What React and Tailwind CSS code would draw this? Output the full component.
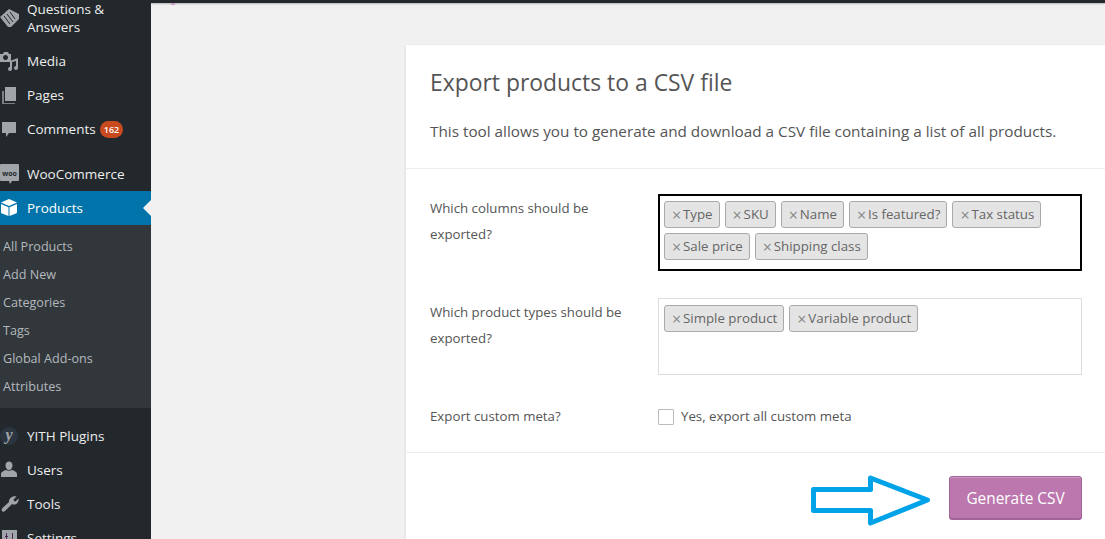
import React from 'react';

const font = { fontFamily: '"Open Sans", sans-serif' };

function Chip({ label }) {
  return (
    <span className="inline-flex items-center h-[27px] pl-[7px] pr-[6px] mr-[5px] mb-[5px] rounded-[3px] border border-[#aaaaaa] bg-[#e4e4e4] text-[13.3px] text-[#666666] whitespace-nowrap">
      <span className="w-[11px] text-[#888888] text-[16px] leading-none">×</span>
      {label}
    </span>
  );
}

function Item({ icon, label, badge, active, two }) {
  return (
    <div className={`flex items-center relative pl-[27px] ${two ? 'h-[52px] leading-[18px]' : 'h-[34px] pt-[1px]'} ${active ? 'bg-[#0073aa] text-white' : 'text-[#eeeeee]'}`}>
      <span className={`absolute left-0 top-1/2 -translate-y-1/2 w-[20px] h-[20px] ${active ? 'text-white' : 'text-[#a0a5aa]'}`}>{icon}</span>
      <span>{label}</span>
      {badge && (
        <span className="ml-[4px] h-[17px] px-[4px] rounded-full bg-[#ca4a1f] text-white text-[9px] font-semibold leading-[17px]">{badge}</span>
      )}
      {active && <span className="absolute right-0 top-1/2 -translate-y-1/2 border-y-[8px] border-r-[8px] border-y-transparent border-r-[#f1f1f1]" />}
    </div>
  );
}

const Svg = ({ children }) => <svg viewBox="0 0 20 20" className="w-full h-full" fill="currentColor">{children}</svg>;

const icons = {
  tag: <Svg><path d="M0 9 9 1l10 5v5l-8 8h-3z" /><path d="M4 8l6 8M7 6l6 8M10 4l5 7" stroke="#23282d" strokeWidth="1" /></Svg>,
  media: <Svg><path d="M0 3h3l1-2h4l1 2h2v8H0zM5.500 4a2.500 2.500 0 1 0 .01 0z" fillRule="evenodd" /><path d="M18 7v10a2 2 0 1 1-2-2v-5l-4 1v7a2 2 0 1 1-2-2v-6z" /></Svg>,
  pages: <Svg><path d="M5 2h11v14H5z" /><path d="M2 6h2v12h11v1H2z" opacity="0.7" /></Svg>,
  comments: <Svg><path d="M2 3h14v11H9l-3 4v-4H2z" /></Svg>,
  woo: (
    <Svg>
      <path d="M1 0h17a1 1 0 0 1 1 1v15a1 1 0 0 1-1 1h-6l-2 3-1-3H1a1 1 0 0 1-1-1V1a1 1 0 0 1 1-1z" />
      <text x="9.500" y="11.500" textAnchor="middle" fontSize="7" fontWeight="700" fill="#23282d">woo</text>
    </Svg>
  ),
  cube: <Svg><path d="M9 1l8 3.500-8 3.500-8-3.500z" /><path d="M1 6l7.500 3.200V18l-6.500-2.500a1.500 1.500 0 0 1-1-1.500zM17 6v8a1.500 1.500 0 0 1-1 1.500L9.500 18V9.200z" /></Svg>,
  yith: <Svg><circle cx="9" cy="10" r="9" fill="#2b3540" /><text x="9" y="14" textAnchor="middle" fontSize="16" fontStyle="italic" fontWeight="700" fontFamily="Liberation Serif, serif">y</text></Svg>,
  users: <Svg><path d="M9 1.500c2 0 3.500 1.500 3.500 4S11 10 9 10 5.500 8 5.500 5.500 7 1.500 9 1.500zM1 17v-3c0-2 3-3.500 5-4 1.500 1 4.500 1 6 0 2 .5 5 2 5 4v3z" /></Svg>,
  tools: <Svg><path d="M16.500 2.500l-3 3 .5 1.500 1.500.5 3-3c.5 3-1.500 6-4.500 6-1 0-1.500 0-2-.5L5 17c-1 1-2.500 1-3 0s-.5-2 .5-3l6.500-6c-.5-3 3-6.500 7.500-5.500z" /></Svg>,
  settings: <Svg><path d="M2 2h15v16H2z" /><path d="M6 5v3H5v1h1v6h1V9h1V8H7V5zM12 5v6h-1v1h1v3h1v-3h1v-1h-1V5z" fill="#4b2a55" /></Svg>,
};

function Row({ label, children, className }) {
  return (
    <div className={`flex ${className}`}>
      <div className="w-[252px] pl-[24px] pr-[24px] pt-[1px] text-[13.25px] leading-[26px] text-[#555555] shrink-0">{label}</div>
      <div className="flex-1">{children}</div>
    </div>
  );
}

export default function App() {
  const subs = ['All Products', 'Add New', 'Categories', 'Tags', 'Global Add-ons', 'Attributes'];
  return (
    <div style={font} className="flex w-[1105px] h-[539px] overflow-hidden bg-[#f1f1f1]">
      <aside className="w-[151px] shrink-0 bg-[#23282d] text-[13.5px]">
        <div className="-mt-[8px]">
          <Item two icon={icons.tag} label={<>Questions &amp;<br />Answers</>} />
          <Item icon={icons.media} label="Media" />
          <Item icon={icons.pages} label="Pages" />
          <Item icon={icons.comments} label="Comments" badge="162" />
          <div className="h-[11px]" />
          <Item icon={icons.woo} label="WooCommerce" />
          <Item active icon={icons.cube} label="Products" />
          <div className="bg-[#32373c] pt-[8px] pb-[7px] pl-[3px] text-[12.6px] text-[#b4b9be]">
            {subs.map((s) => <div key={s} className="h-[28px] leading-[28px]">{s}</div>)}
          </div>
          <div className="h-[11px]" />
          <Item icon={icons.yith} label="YITH Plugins" />
          <Item icon={icons.users} label="Users" />
          <Item icon={icons.tools} label="Tools" />
          <Item icon={icons.settings} label="Settings" />
        </div>
      </aside>
      <main className="flex-1 min-w-0 relative">
        <div className="h-[3px] bg-[#23282d] shadow-[0_1px_2px_rgba(0,0,0,0.25)]" />
        <span className="absolute left-[20px] top-[3px] w-[4px] h-[2px] bg-[#c9a0c9]" />
        <div className="ml-[255px] mt-[42px] bg-white shadow-[0_1px_3px_rgba(0,0,0,0.13)] w-[699px]">
          <div className="h-[124px] pl-[24px] pt-[22px] border-b border-[#eeeeee]">
            <h1 className="text-[22.9px] leading-[32px] text-[#555555]">Export products to a CSV file</h1>
            <p className="mt-[20px] text-[15.3px] leading-[24px] whitespace-nowrap text-[#555555]">This tool allows you to generate and download a CSV file containing a list of all products.</p>
          </div>
          <div className="h-[283px] pt-[25px]">
            <Row label="Which columns should be exported?">
              <div className="w-[424px] h-[77px] border-2 border-black pl-[4px] pt-[5px] flex flex-wrap content-start">
                {['Type', 'SKU', 'Name', 'Is featured?', 'Tax status', 'Sale price', 'Shipping class'].map((c) => <Chip key={c} label={c} />)}
              </div>
            </Row>
            <Row label="Which product types should be exported?" className="mt-[27px]">
              <div className="w-[424px] h-[77px] border border-[#dddddd] pl-[5px] pt-[6px] flex flex-wrap content-start">
                {['Simple product', 'Variable product'].map((c) => <Chip key={c} label={c} />)}
              </div>
            </Row>
            <Row label="Export custom meta?" className="mt-[27px]">
              <label className="flex items-center h-[26px] mt-[1px] pt-[1px] text-[13.25px] text-[#555555]">
                <span className="w-[16px] h-[16px] border border-[#bbbbbb] rounded-[1px] bg-white mr-[7px]" />
                Yes, export all custom meta
              </label>
            </Row>
          </div>
          <div className="border-t border-[#eeeeee] h-[90px] relative">
            <svg viewBox="0 0 124 52" className="absolute left-[404px] top-[21px] w-[124px] h-[52px]">
              <path d="M3.500 15.500h57V4l57 22-57 23V36.500h-57z" fill="white" stroke="#00a2e8" strokeWidth="5" strokeLinejoin="round" />
            </svg>
            <button className="absolute left-[543px] top-[23px] w-[133px] h-[43px] pt-[3px] rounded-[3px] bg-[#bb77ae] border border-[#a36597] shadow-[inset_0_1px_0_rgba(255,255,255,0.25),0_1px_0_#a36597] text-[15.4px] text-white">Generate CSV</button>
          </div>
        </div>
      </main>
    </div>
  );
}
